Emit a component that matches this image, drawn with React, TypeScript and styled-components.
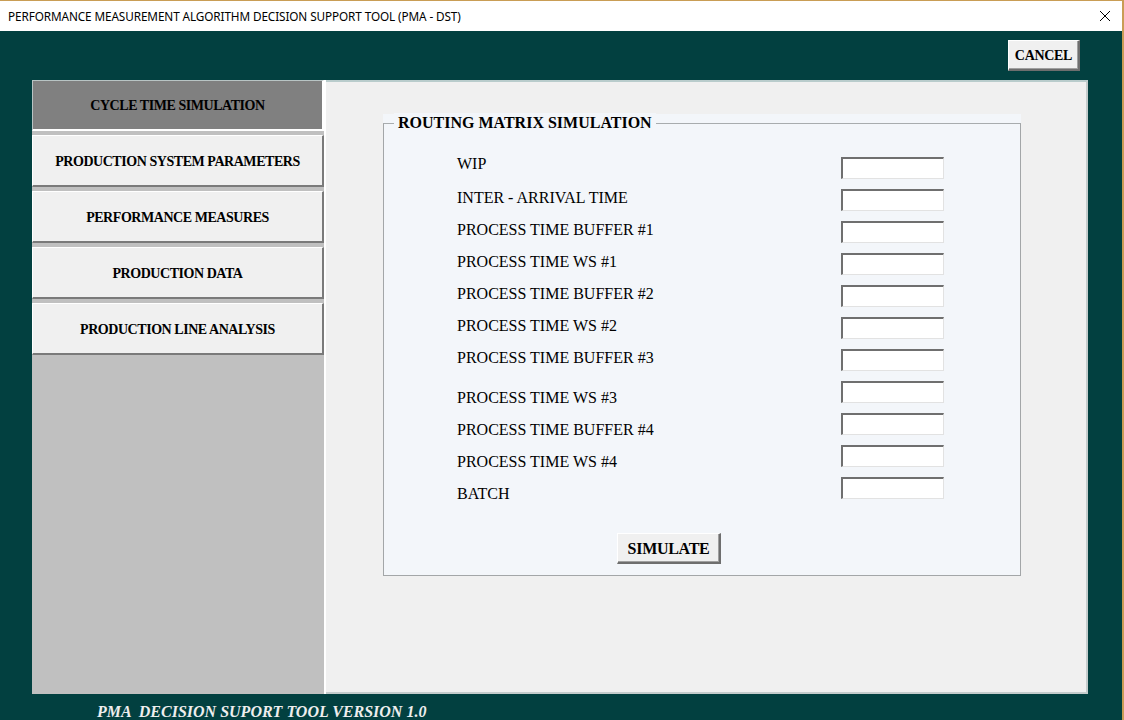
import React from "react";
import styled, { createGlobalStyle } from "styled-components";

const Global = createGlobalStyle`
  html, body { margin: 0; padding: 0; }
  body { background: #024040; overflow: hidden; }
  * { box-sizing: border-box; }
`;

const serif = `"Liberation Serif", "Times New Roman", serif`;

const Window = styled.div`
  width: 1124px;
  height: 720px;
  background: #024040;
  border-top: 1px solid #c99d55;
  border-right: 2px solid #c99d55;
  display: flex;
  flex-direction: column;
  overflow: hidden;
`;

const TitleBar = styled.div`
  height: 30px;
  flex: none;
  background: #ffffff;
  display: flex;
  align-items: center;
  justify-content: space-between;
  padding: 0 10px 0 8px;
`;

const TitleText = styled.div`
  font-family: "Noto Sans", "Open Sans", sans-serif;
  font-size: 11.75px;
  color: #000;
  letter-spacing: -0.1px;
`;

const CloseIcon = styled.svg`
  width: 12px;
  height: 12px;
  margin-right: 1px;
`;

const Body = styled.div`
  flex: 1;
  display: flex;
  flex-direction: column;
  padding: 9px 34px 0 32px;
`;

const TopRow = styled.div`
  display: flex;
  justify-content: flex-end;
  padding-right: 8px;
  margin-bottom: 9px;
`;

const RaisedButton = styled.button<{ $w: number; $h: number; $size: number }>`
  width: ${(p) => p.$w}px;
  height: ${(p) => p.$h}px;
  background: #f0f0f0;
  border: none;
  border-top: 1px solid #ffffff;
  border-left: 1px solid #ffffff;
  border-right: 2px solid #6e6e6e;
  border-bottom: 2px solid #6e6e6e;
  box-shadow: inset -1px -1px 0 #a0a0a0;
  font-family: ${serif};
  font-weight: bold;
  font-size: ${(p) => p.$size}px;
  color: #000;
  letter-spacing: -0.3px;
  padding: 1px 0 0;
  cursor: pointer;
`;

const MainPanel = styled.div`
  height: 614px;
  display: flex;
  flex: none;
`;

const SidePanel = styled.div`
  width: 294px;
  background: #c0c0c0;
  border-right: 2px solid #ffffff;
  display: flex;
  flex-direction: column;
  gap: 4px;
`;

const Tab = styled.div<{ $active?: boolean }>`
  height: ${(p) => (p.$active ? 51 : 52)}px;
  display: flex;
  align-items: center;
  justify-content: center;
  padding-top: 2px;
  background: ${(p) => (p.$active ? "#808080" : "#f0f0f0")};
  border-top: 1px solid ${(p) => (p.$active ? "#b8c4c4" : "#ffffff")};
  border-left: 1px solid ${(p) => (p.$active ? "#b8c4c4" : "#ffffff")};
  border-right: 2px solid ${(p) => (p.$active ? "#ffffff" : "#7a7a7a")};
  border-bottom: 2px solid ${(p) => (p.$active ? "#ffffff" : "#7a7a7a")};
  font-family: ${serif};
  font-weight: bold;
  font-size: 14px;
  letter-spacing: -0.45px;
  color: #000;
`;

const Content = styled.div`
  flex: 1;
  background: #f0f0f0;
  border-top: 2px solid #b9cccc;
  border-right: 2px solid #c4cccc;
  border-bottom: 2px solid #c4cccc;
  padding: 32px 65px 0 57px;
`;

const Group = styled.div`
  background: #f3f6fa;
  padding-top: 9px;
`;

const Frame = styled.div`
  position: relative;
  border: 1px solid #a3a6a8;
  border-top-color: #a8acae;
  padding: 0 0 11px 0;
`;

const Legend = styled.div`
  position: absolute;
  top: -11px;
  left: 10px;
  padding: 0 4px;
  background: #f3f6fa;
  font-family: ${serif};
  font-weight: bold;
  font-size: 16px;
  line-height: 20px;
  color: #000;
`;

const FormRow = styled.div`
  display: flex;
  padding-left: 73px;
`;

const LabelCol = styled.div`
  width: 384px;
  padding-top: 24px;
  display: flex;
  flex-direction: column;
`;

const Label = styled.div<{ $after?: number }>`
  height: 32px;
  line-height: 32px;
  margin-bottom: ${(p) => p.$after ?? 0}px;
  font-family: ${serif};
  font-size: 16px;
  color: #000;
  white-space: nowrap;
`;

const InputCol = styled.div`
  padding-top: 33px;
  display: flex;
  flex-direction: column;
  gap: 10px;
`;

const Field = styled.input`
  width: 103px;
  height: 22px;
  background: #ffffff;
  border: none;
  border-top: 2px solid #6f6f6f;
  border-left: 2px solid #6f6f6f;
  border-right: 1px solid #e2e2e2;
  border-bottom: 1px solid #e2e2e2;
  padding: 0 3px;
  outline: none;
`;

const ButtonRow = styled.div`
  display: flex;
  padding-left: 233px;
  margin-top: 23px;
`;

const Footer = styled.div`
  padding: 8px 0 0 65px;
  font-family: ${serif};
  font-style: italic;
  font-weight: bold;
  font-size: 16px;
  line-height: 20px;
  color: #eeeeee;
  white-space: pre;
`;

const tabs = [
  "CYCLE TIME SIMULATION",
  "PRODUCTION SYSTEM PARAMETERS",
  "PERFORMANCE MEASURES",
  "PRODUCTION DATA",
  "PRODUCTION LINE ANALYSIS",
];

const rows: { label: string; after?: number }[] = [
  { label: "WIP", after: 2 },
  { label: "INTER - ARRIVAL TIME" },
  { label: "PROCESS TIME BUFFER #1" },
  { label: "PROCESS TIME WS #1" },
  { label: "PROCESS TIME BUFFER #2" },
  { label: "PROCESS TIME WS #2" },
  { label: "PROCESS TIME BUFFER #3", after: 8 },
  { label: "PROCESS TIME WS #3" },
  { label: "PROCESS TIME BUFFER #4" },
  { label: "PROCESS TIME WS #4" },
  { label: "BATCH" },
];

export default function App() {
  return (
    <>
      <Global />
      <Window>
        <TitleBar>
          <TitleText>PERFORMANCE MEASUREMENT ALGORITHM DECISION SUPPORT TOOL (PMA - DST)</TitleText>
          <CloseIcon viewBox="0 0 12 12">
            <path d="M1 1 L11 11 M11 1 L1 11" stroke="#000" strokeWidth="1" fill="none" />
          </CloseIcon>
        </TitleBar>
        <Body>
          <TopRow>
            <RaisedButton $w={72} $h={31} $size={14}>CANCEL</RaisedButton>
          </TopRow>
          <MainPanel>
            <SidePanel>
              {tabs.map((t, i) => (
                <Tab key={t} $active={i === 0}>
                  {t}
                </Tab>
              ))}
            </SidePanel>
            <Content>
              <Group>
                <Frame>
                  <Legend>ROUTING MATRIX SIMULATION</Legend>
                  <FormRow>
                    <LabelCol>
                      {rows.map((r) => (
                        <Label key={r.label} $after={r.after}>
                          {r.label}
                        </Label>
                      ))}
                    </LabelCol>
                    <InputCol>
                      {rows.map((r) => (
                        <Field key={r.label} />
                      ))}
                    </InputCol>
                  </FormRow>
                  <ButtonRow>
                    <RaisedButton $w={104} $h={31} $size={16}>SIMULATE</RaisedButton>
                  </ButtonRow>
                </Frame>
              </Group>
            </Content>
          </MainPanel>
          <Footer>{"PMA  DECISION SUPORT TOOL VERSION 1.0"}</Footer>
        </Body>
      </Window>
    </>
  );
}
